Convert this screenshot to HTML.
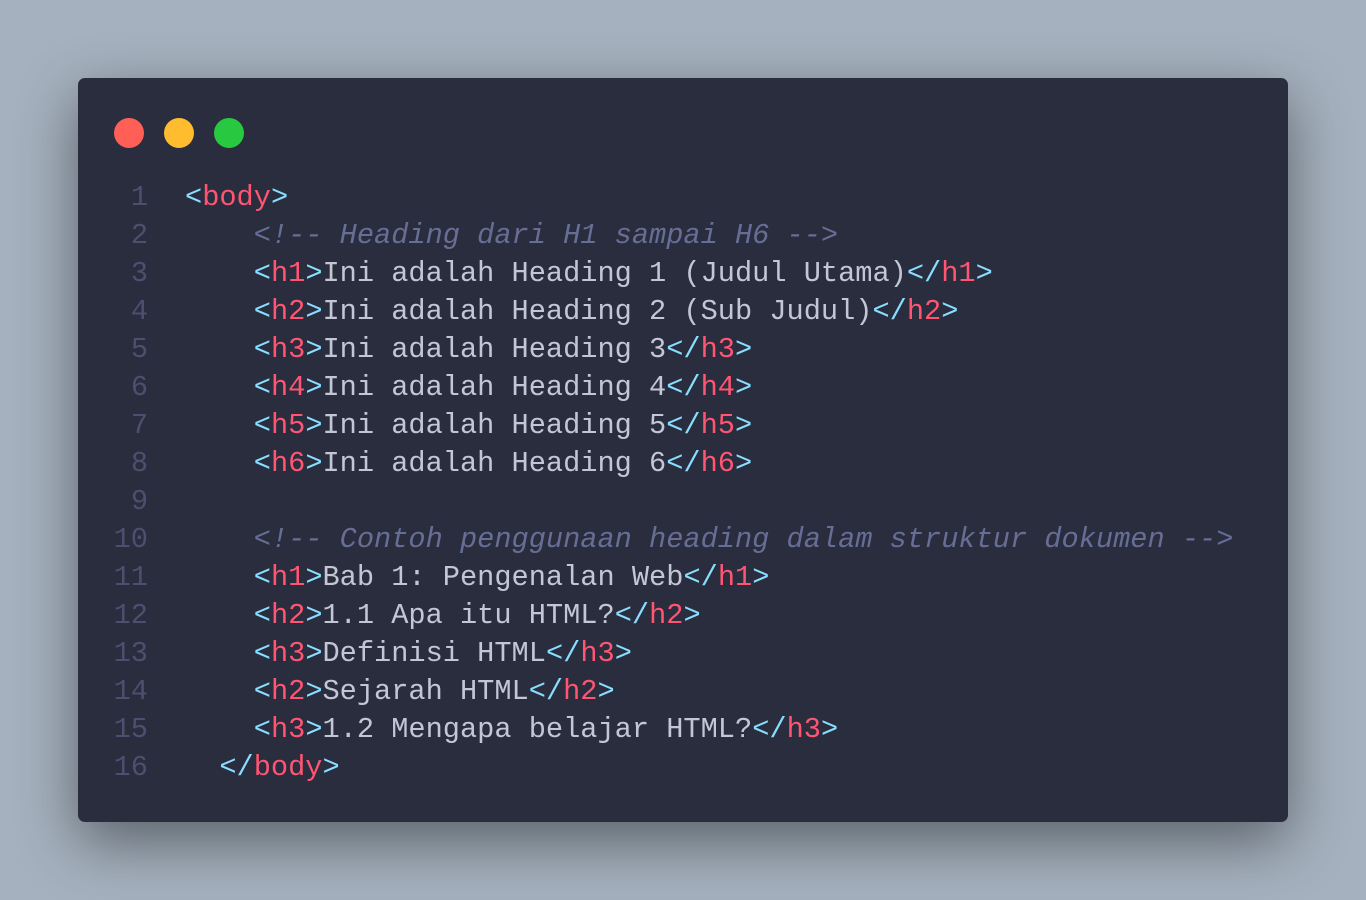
<!DOCTYPE html><html><head><style>
body{margin:0;width:1366px;height:900px;background:#a5b1be;overflow:hidden;font-family:"Liberation Mono",monospace}
.win{position:absolute;left:78px;top:78px;width:1210px;height:744px;background:#292d3e;border-radius:7px;box-shadow:0 20px 60px rgba(0,0,0,.45)}
.d{position:absolute;top:40px;width:30px;height:30px;border-radius:50%}
.code{position:absolute;left:0;top:101px;font-size:28.65px;line-height:38px;white-space:pre;color:#c3c6d4}
.ln{display:inline-block;width:70px;text-align:right;color:#4b5070;margin-right:37px}
.t{color:#89ddff}.n{color:#ff5572}.c{color:#676e95;font-style:italic}
</style></head><body><div class="win">
<div class="d" style="left:36px;background:#ff5f57"></div>
<div class="d" style="left:86px;background:#febc2e"></div>
<div class="d" style="left:136px;background:#28c840"></div>
<div class="code"><span class="ln">1</span><span class="t">&lt;</span><span class="n">body</span><span class="t">&gt;</span>
<span class="ln">2</span>    <span class="c">&lt;!-- Heading dari H1 sampai H6 --&gt;</span>
<span class="ln">3</span>    <span class="t">&lt;</span><span class="n">h1</span><span class="t">&gt;</span>Ini adalah Heading 1 (Judul Utama)<span class="t">&lt;/</span><span class="n">h1</span><span class="t">&gt;</span>
<span class="ln">4</span>    <span class="t">&lt;</span><span class="n">h2</span><span class="t">&gt;</span>Ini adalah Heading 2 (Sub Judul)<span class="t">&lt;/</span><span class="n">h2</span><span class="t">&gt;</span>
<span class="ln">5</span>    <span class="t">&lt;</span><span class="n">h3</span><span class="t">&gt;</span>Ini adalah Heading 3<span class="t">&lt;/</span><span class="n">h3</span><span class="t">&gt;</span>
<span class="ln">6</span>    <span class="t">&lt;</span><span class="n">h4</span><span class="t">&gt;</span>Ini adalah Heading 4<span class="t">&lt;/</span><span class="n">h4</span><span class="t">&gt;</span>
<span class="ln">7</span>    <span class="t">&lt;</span><span class="n">h5</span><span class="t">&gt;</span>Ini adalah Heading 5<span class="t">&lt;/</span><span class="n">h5</span><span class="t">&gt;</span>
<span class="ln">8</span>    <span class="t">&lt;</span><span class="n">h6</span><span class="t">&gt;</span>Ini adalah Heading 6<span class="t">&lt;/</span><span class="n">h6</span><span class="t">&gt;</span>
<span class="ln">9</span>
<span class="ln">10</span>    <span class="c">&lt;!-- Contoh penggunaan heading dalam struktur dokumen --&gt;</span>
<span class="ln">11</span>    <span class="t">&lt;</span><span class="n">h1</span><span class="t">&gt;</span>Bab 1: Pengenalan Web<span class="t">&lt;/</span><span class="n">h1</span><span class="t">&gt;</span>
<span class="ln">12</span>    <span class="t">&lt;</span><span class="n">h2</span><span class="t">&gt;</span>1.1 Apa itu HTML?<span class="t">&lt;/</span><span class="n">h2</span><span class="t">&gt;</span>
<span class="ln">13</span>    <span class="t">&lt;</span><span class="n">h3</span><span class="t">&gt;</span>Definisi HTML<span class="t">&lt;/</span><span class="n">h3</span><span class="t">&gt;</span>
<span class="ln">14</span>    <span class="t">&lt;</span><span class="n">h2</span><span class="t">&gt;</span>Sejarah HTML<span class="t">&lt;/</span><span class="n">h2</span><span class="t">&gt;</span>
<span class="ln">15</span>    <span class="t">&lt;</span><span class="n">h3</span><span class="t">&gt;</span>1.2 Mengapa belajar HTML?<span class="t">&lt;/</span><span class="n">h3</span><span class="t">&gt;</span>
<span class="ln">16</span>  <span class="t">&lt;/</span><span class="n">body</span><span class="t">&gt;</span></div>
</div></body></html>
